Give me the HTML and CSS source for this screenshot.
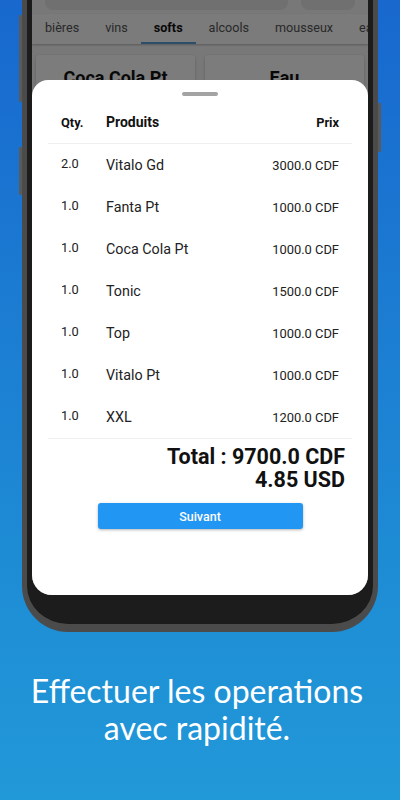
FILE: index.html
```html
<!DOCTYPE html>
<html lang="fr">
<head>
  <meta charset="UTF-8">
  <title>Commande</title>
  <link rel="stylesheet" href="styles.css">
</head>
<body>
  <div class="phone">
    <span class="side-btn left-a"></span>
    <span class="side-btn left-b"></span>
    <span class="side-btn right-a"></span>

    <div class="screen">
      <div class="app">
        <div class="app-top">
          <div class="search">
            <svg class="search-icon" width="12" height="12" viewBox="0 0 24 24"><circle cx="10" cy="10" r="7" fill="none" stroke="#666" stroke-width="2.5"/><path d="M15 15l6 6" stroke="#666" stroke-width="2.5"/></svg>
            <span>Search</span>
          </div>
          <div class="search-btn"></div>
        </div>

        <div class="tabs">
          <span class="tab">bières</span>
          <span class="tab">vins</span>
          <span class="tab active">softs</span>
          <span class="tab">alcools</span>
          <span class="tab">mousseux</span>
          <span class="tab">eaux</span>
        </div>

        <div class="cards">
          <div class="card">Coca Cola Pt</div>
          <div class="card">Eau</div>
        </div>
      </div>

      <div class="scrim"></div>

      <div class="sheet">
        <div class="handle"></div>

        <div class="table">
          <div class="row head">
            <span class="qty">Qty.</span>
            <span class="name">Produits</span>
            <span class="price">Prix</span>
          </div>
          <div class="row">
            <span class="qty">2.0</span>
            <span class="name">Vitalo Gd</span>
            <span class="price">3000.0 CDF</span>
          </div>
          <div class="row">
            <span class="qty">1.0</span>
            <span class="name">Fanta Pt</span>
            <span class="price">1000.0 CDF</span>
          </div>
          <div class="row">
            <span class="qty">1.0</span>
            <span class="name">Coca Cola Pt</span>
            <span class="price">1000.0 CDF</span>
          </div>
          <div class="row">
            <span class="qty">1.0</span>
            <span class="name">Tonic</span>
            <span class="price">1500.0 CDF</span>
          </div>
          <div class="row">
            <span class="qty">1.0</span>
            <span class="name">Top</span>
            <span class="price">1000.0 CDF</span>
          </div>
          <div class="row">
            <span class="qty">1.0</span>
            <span class="name">Vitalo Pt</span>
            <span class="price">1000.0 CDF</span>
          </div>
          <div class="row">
            <span class="qty">1.0</span>
            <span class="name">XXL</span>
            <span class="price">1200.0 CDF</span>
          </div>
        </div>

        <div class="total">
          <div>Total : 9700.0 CDF</div>
          <div>4.85 USD</div>
        </div>

        <button class="next">Suivant</button>
      </div>
    </div>
  </div>

  <p class="caption">Effectuer les operations<br>avec rapidité.</p>
</body>
</html>
```

FILE: styles.css
```css
body {
  margin: 0;
  height: 800px;
  overflow: hidden;
  background: linear-gradient(180deg, #1868ce 0%, #1e8cd5 70%, #2198d8 100%);
  font-family: Roboto, "Noto Sans", sans-serif;
}

/* phone mockup */
.phone {
  position: relative;
  margin: -30px 22px 0;
  padding: 5px 5px 29px;
  background: #1c1c1c;
  border: 5px solid #4b4b4b;
  border-bottom-width: 8px;
  border-radius: 0 0 46px 46px;
}

.side-btn {
  position: absolute;
  width: 3px;
  background: #5a5a5a;
  border-radius: 1px;
}

.left-a { left: -8px; top: 40px; height: 87px; }
.left-b { left: -8px; top: 172px; height: 48px; }
.right-a { right: -8px; top: 128px; height: 49px; }

.screen {
  position: relative;
  height: 615px;
  background: #f4f4f4;
  border-radius: 0 0 20px 20px;
  overflow: hidden;
}

/* app behind the sheet */
.app-top {
  display: flex;
  gap: 13px;
  padding: 0 13px;
}

.search {
  flex: 1;
  height: 30px;
  background: #e4e4e4;
  border-radius: 0 0 8px 8px;
  display: flex;
  align-items: center;
  gap: 5px;
  padding-left: 17px;
  font-size: 14px;
  color: #555;
}

.search-btn {
  width: 54px;
  height: 30px;
  background: #e4e4e4;
  border-radius: 0 0 8px 8px;
}

.tabs {
  display: flex;
  margin-top: 4px;
  background: #fafafa;
  white-space: nowrap;
  overflow: hidden;
  box-shadow: 0 1px 2px rgba(0,0,0,0.25);
}

.tab {
  padding: 0 13px;
  line-height: 28px;
  border-bottom: 2px solid transparent;
  font-size: 12.6px;
  color: #555;
}

.tab.active {
  color: #111;
  font-weight: bold;
  border-bottom-color: #5d9fd8;
}

.cards {
  display: grid;
  grid-template-columns: 1fr 1fr;
  gap: 10px;
  padding: 11px 4px;
}

.card {
  height: 150px;
  padding-top: 12px;
  background: #fcfcfc;
  border-radius: 3px;
  box-shadow: 0 1px 3px rgba(0,0,0,0.2);
  text-align: center;
  font-size: 18px;
  font-weight: bold;
  color: #111;
}

.scrim {
  position: absolute;
  inset: 0;
  background: rgba(0,0,0,0.51);
}

/* bottom sheet */
.sheet {
  position: absolute;
  left: 0;
  right: 0;
  top: 100px;
  bottom: 0;
  background: #fff;
  border-radius: 16px 16px 0 0;
}

.handle {
  width: 36px;
  height: 4px;
  margin: 12px auto 5px;
  background: #a3a3a3;
  border-radius: 2px;
}

.table {
  margin: 0 16px;
  border-bottom: 1px solid #efefef;
}

.row {
  display: flex;
  align-items: center;
  height: 42px;
  padding: 0 13px;
  color: #222;
}

.row.head {
  border-bottom: 1px solid #efefef;
  font-weight: bold;
  color: #111;
}

.qty {
  width: 45px;
  font-size: 12.8px;
  margin-top: -3px;
}

.name {
  flex: 1;
  font-size: 14.3px;
}

.price {
  font-size: 12.9px;
}

.head .qty,
.head .price {
  font-size: 12.8px;
  margin-top: 0;
}

.head .name {
  font-size: 14px;
}

.total {
  padding: 6px 23px 0 0;
  text-align: right;
  font-size: 21.5px;
  font-weight: bold;
  line-height: 23px;
  color: #111;
}

.next {
  display: block;
  width: 205px;
  height: 26px;
  margin: 12px auto 0;
  background: #2196f3;
  color: #fff;
  border: none;
  border-radius: 3px;
  box-shadow: 0 1px 3px rgba(0,0,0,0.3);
  font-family: Roboto, sans-serif;
  font-size: 12.5px;
  font-weight: 500;
}

.caption {
  margin: 40px 0 0;
  padding-right: 6px;
  text-align: center;
  font-family: Lato, "Open Sans", sans-serif;
  font-size: 32px;
  line-height: 37px;
  color: #fff;
}
```
